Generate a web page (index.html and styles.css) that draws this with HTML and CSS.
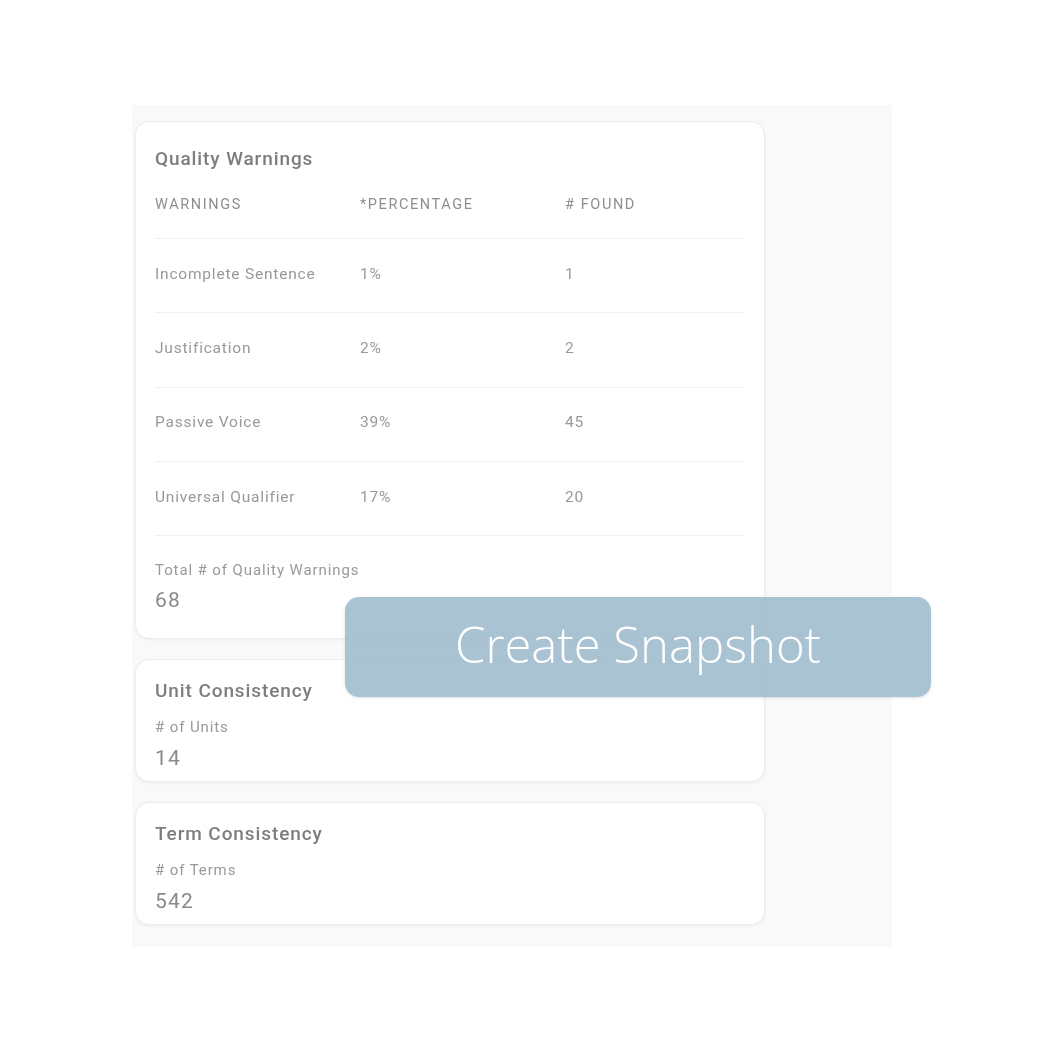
FILE: index.html
```html
<!DOCTYPE html>
<html lang="en">
<head>
<meta charset="utf-8">
<title>Quality Report</title>
<link rel="stylesheet" href="styles.css">
</head>
<body>
<div class="panel">
  <section class="card card-main">
    <h2 class="card-title">Quality Warnings</h2>
    <div class="table">
      <div class="row head">
        <span>Warnings</span><span>*Percentage</span><span># Found</span>
      </div>
      <div class="row"><span>Incomplete Sentence</span><span>1%</span><span>1</span></div>
      <div class="row"><span>Justification</span><span>2%</span><span>2</span></div>
      <div class="row"><span>Passive Voice</span><span>39%</span><span>45</span></div>
      <div class="row"><span>Universal Qualifier</span><span>17%</span><span>20</span></div>
    </div>
    <div class="stat">
      <div class="stat-label">Total # of Quality Warnings</div>
      <div class="stat-value">68</div>
    </div>
  </section>
  <section class="card card-small">
    <h2 class="card-title">Unit Consistency</h2>
    <div class="stat">
      <div class="stat-label"># of Units</div>
      <div class="stat-value">14</div>
    </div>
  </section>
  <section class="card card-small">
    <h2 class="card-title">Term Consistency</h2>
    <div class="stat">
      <div class="stat-label"># of Terms</div>
      <div class="stat-value">542</div>
    </div>
  </section>
</div>
<button class="snapshot">Create Snapshot</button>
</body>
</html>
```
FILE: styles.css
```css
html, body {
  margin: 0;
  padding: 0;
  background: #ffffff;
}
body {
  width: 1062px;
  height: 1044px;
  position: relative;
  font-family: Roboto, "Liberation Sans", sans-serif;
  color: #8e8e8e;
}
.panel {
  margin: 105px 0 0 132px;
  width: 760px;
  height: 842px;
  box-sizing: border-box;
  padding: 16px 0 0 3px;
  background: #f9f9f9;
  display: flex;
  flex-direction: column;
  gap: 20px;
  filter: blur(0.6px);
}
.card {
  width: 630px;
  box-sizing: border-box;
  background: #ffffff;
  border: 1px solid #ececec;
  border-radius: 14px;
  box-shadow: 0 1px 3px rgba(0,0,0,0.05);
  padding: 0 20px 0 19px;
}
.card-main {
  height: 518px;
  padding-top: 25px;
}
.card-small {
  height: 123px;
  padding-top: 19px;
}
.card-title {
  margin: 0;
  font-size: 19px;
  font-weight: 500;
  letter-spacing: 0.9px;
  color: #7d7d7d;
  line-height: 24px;
}
.table {
  margin-top: 25px;
}
.row {
  display: grid;
  grid-template-columns: 205px 205px 1fr;
  box-sizing: border-box;
  height: 74.3px;
  align-items: center;
  border-bottom: 1px solid #f1f1f1;
  font-size: 15.5px;
  letter-spacing: 0.8px;
  color: #999999;
}
.row span {
  padding-bottom: 4px;
}
.head {
  height: 43px;
  align-items: start;
  font-size: 14.5px;
  text-transform: uppercase;
  letter-spacing: 1.6px;
  color: #8e8e8e;
}
.head span {
  padding-bottom: 0;
}
.stat {
  margin-top: 24px;
}
.card-small .stat {
  margin-top: 14px;
}
.stat-label {
  font-size: 15px;
  letter-spacing: 0.9px;
  color: #999999;
  line-height: 20px;
}
.stat-value {
  margin-top: 8px;
  font-size: 21px;
  letter-spacing: 1.2px;
  color: #8a8a8a;
  line-height: 24px;
}
.card-small .stat-value {
  margin-top: 9px;
}
.snapshot {
  position: absolute;
  left: 345px;
  top: 597px;
  width: 586px;
  height: 100px;
  border: none;
  border-radius: 14px;
  background: rgba(160, 188, 206, 0.9);
  color: #ffffff;
  font-family: "Open Sans", sans-serif;
  font-size: 49px;
  font-weight: 300;
  padding: 0 0 7px 0;
  box-shadow: 0 1px 3px rgba(0,0,0,0.12);
}
```
